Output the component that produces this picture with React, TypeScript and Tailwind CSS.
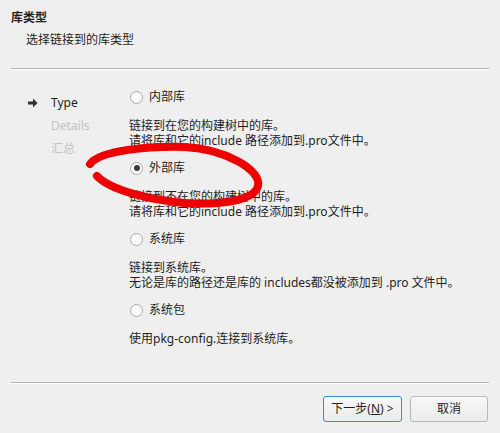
import React from "react";

const font = { fontFamily: "'Noto Sans', 'Noto Sans CJK SC', sans-serif" };

const options = [
  {
    label: "内部库",
    checked: false,
    lines: ["链接到在您的构建树中的库。", "请将库和它的include 路径添加到.pro文件中。"],
  },
  {
    label: "外部库",
    checked: true,
    lines: ["链接到不在您的构建树中的库。", "请将库和它的include 路径添加到.pro文件中。"],
  },
  {
    label: "系统库",
    checked: false,
    lines: ["链接到系统库。", "无论是库的路径还是库的 includes都没被添加到 .pro 文件中。"],
  },
  {
    label: "系统包",
    checked: false,
    lines: ["使用pkg-config.连接到系统库。"],
  },
];

const Radio = ({ checked }: { checked: boolean }) => (
  <div className="w-[13px] h-[13px] rounded-full border border-[#a8a8a8] bg-white flex items-center justify-center shrink-0">
    {checked && <div className="w-[6px] h-[6px] rounded-full bg-[#3a3a3a]" />}
  </div>
);

const Divider = () => (
  <div className="mx-[11px] border-t border-[#b4b4b4] border-b border-b-white" />
);

export default function App() {
  return (
    <div
      className="relative w-[500px] h-[433px] bg-[#efefef] text-[#1e1e1e] text-[12px] overflow-hidden flex flex-col"
      style={font}
    >
      {/* Header */}
      <div className="pt-[10px] pl-[11px] h-[68px]">
        <div className="font-bold leading-[16px]">库类型</div>
        <div className="mt-[6px] pl-[15px] leading-[16px]">选择链接到的库类型</div>
      </div>
      <Divider />

      {/* Body */}
      <div className="flex flex-1">
        <div className="w-[129px] pl-[28px] pt-[21px] leading-[23px]">
          <div className="flex items-center">
            <svg width="10" height="10" viewBox="0 0 10 10" className="mr-[13px]">
              <polygon points="0,3.5 5,3.5 5,0.5 9.5,5 5,9.5 5,6.5 0,6.5" fill="#333" />
            </svg>
            <span>Type</span>
          </div>
          <div className="pl-[23px] text-[#c3c3c3]">Details</div>
          <div className="pl-[23px] text-[#c3c3c3]">汇总</div>
        </div>

        <div className="pt-[19px] flex flex-col">
          {options.map((o, i) => (
            <div key={i} className={i > 0 ? "mt-[12px]" : ""}>
              <div className="h-[16px] flex items-center pl-[1px]">
                <Radio checked={o.checked} />
                <span className="ml-[6px] leading-[16px]">{o.label}</span>
              </div>
              <div className="mt-[13px] leading-[15px]">
                {o.lines.map((l, j) => (
                  <div key={j}>{l}</div>
                ))}
              </div>
            </div>
          ))}
        </div>
      </div>

      {/* Footer */}
      <Divider />
      <div className="flex justify-end gap-[8px] pr-[12px] pt-[12px] pb-[11px]">
        <button className="w-[79px] h-[26px] rounded-[3px] border border-[#3f8ad8] bg-gradient-to-b from-[#f8f8f8] to-[#ebebeb] text-[12px] text-[#1e1e1e]">
          下一步(<span className="underline">N</span>) &gt;
        </button>
        <button className="w-[78px] h-[26px] rounded-[3px] border border-[#b8b8b8] bg-gradient-to-b from-[#f8f8f8] to-[#ebebeb] text-[12px] text-[#1e1e1e]">
          取消
        </button>
      </div>

      {/* Red hand-drawn annotation */}
      <svg className="absolute inset-0 pointer-events-none" width="500" height="433" viewBox="0 0 500 433">
        <path
          d="M90 164 C100 150 150 146 185 147 C225 149 262 170 258 186 C254 202 215 205 185 203 C150 200 110 190 97 176"
          fill="none"
          stroke="#ee0000"
          strokeWidth="8"
          strokeLinecap="round"
        />
      </svg>
    </div>
  );
}
